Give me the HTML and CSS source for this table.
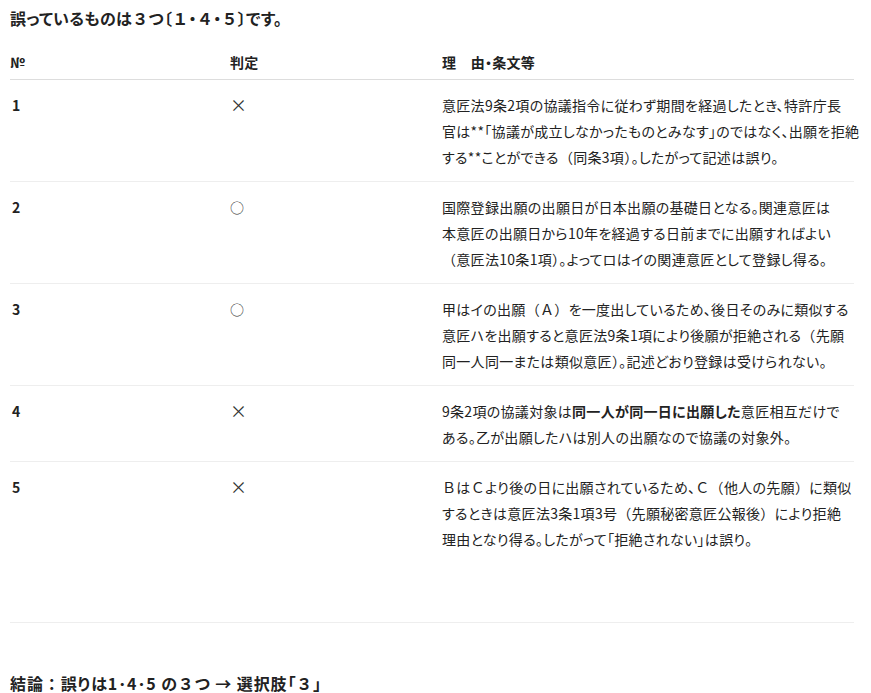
FILE: index.html
```html
<!DOCTYPE html>
<html lang="ja">
<head>
<meta charset="utf-8">
<title>判定表</title>
<link rel="stylesheet" href="styles.css">
</head>
<body>
<main class="page">
  <p class="title">誤っているものは<span class="fw">３</span>つ〔<span class="fw">１</span>・<span class="fw">４</span>・<span class="fw">５</span>〕です。</p>
  <table class="judge">
    <colgroup>
      <col class="c-no">
      <col class="c-mark">
      <col class="c-reason">
    </colgroup>
    <thead>
      <tr>
        <th>№</th>
        <th>判定</th>
        <th>理<span class="fw">　</span>由・条文等</th>
      </tr>
    </thead>
    <tbody>
      <tr>
        <td class="no">1</td>
        <td class="mark mark-x">×</td>
        <td class="reason">意匠法9条2項の協議指令に従わず期間を経過したとき、特許庁長<br>官は**「協議が成立しなかったものとみなす」のではなく、出願を拒絶<br>する**ことができる<span class="fw">（</span>同条3項<span class="fw">）</span>。したがって記述は誤り。</td>
      </tr>
      <tr>
        <td class="no">2</td>
        <td class="mark mark-o">○</td>
        <td class="reason">国際登録出願の出願日が日本出願の基礎日となる。関連意匠は<br>本意匠の出願日から10年を経過する日前までに出願すればよい<br><span class="fw">（</span>意匠法10条1項<span class="fw">）</span>。よってロはイの関連意匠として登録し得る。</td>
      </tr>
      <tr>
        <td class="no">3</td>
        <td class="mark mark-o">○</td>
        <td class="reason">甲はイの出願<span class="fw">（Ａ）</span>を一度出しているため、後日そのみに類似する<br>意匠ハを出願すると意匠法9条1項により後願が拒絶される<span class="fw">（</span>先願<br>同一人同一または類似意匠<span class="fw">）</span>。記述どおり登録は受けられない。</td>
      </tr>
      <tr>
        <td class="no">4</td>
        <td class="mark mark-x">×</td>
        <td class="reason">9条2項の協議対象は<strong>同一人が同一日に出願した</strong>意匠相互だけで<br>ある。乙が出願したハは別人の出願なので協議の対象外。</td>
      </tr>
      <tr class="last">
        <td class="no">5</td>
        <td class="mark mark-x">×</td>
        <td class="reason"><span class="fw">Ｂ</span>は<span class="fw">Ｃ</span>より後の日に出願されているため、<span class="fw">Ｃ（</span>他人の先願<span class="fw">）</span>に類似<br>するときは意匠法3条1項3号<span class="fw">（</span>先願秘密意匠公報後<span class="fw">）</span>により拒絶<br>理由となり得る。したがって「拒絶されない」は誤り。</td>
      </tr>
    </tbody>
  </table>
  <p class="conclusion">結論<span class="fw">：</span>誤りは1･4･5 の<span class="fw">３</span>つ → 選択肢「<span class="fw">３</span>」</p>
</main>
</body>
</html>
```

FILE: styles.css
```css
html, body {
  margin: 0;
  padding: 0;
  background: #ffffff;
}

body {
  font-family: "Noto Sans CJK JP", "Noto Sans", sans-serif;
  color: #222222;
  font-size: 14px;
  line-height: 26px;
  letter-spacing: 0.3px;
  font-feature-settings: "palt";
}

.fw {
  font-feature-settings: normal;
}

.page {
  padding: 5px 17px 0 10px;
}

.title {
  margin: 0;
  font-size: 16px;
  font-weight: 700;
  line-height: 26px;
}

.judge {
  width: 844px;
  border-collapse: collapse;
  table-layout: fixed;
}

.c-no { width: 220px; }
.c-mark { width: 212px; }
.c-reason { width: 412px; }

.judge th {
  text-align: left;
  font-weight: 700;
  font-size: 14px;
  padding: 18px 0 4px 0;
  border-bottom: 1px solid #dddddd;
  white-space: nowrap;
}

.judge td {
  vertical-align: top;
  padding: 12px 0 11px 0;
  border-bottom: 1px solid #eeeeee;
}

.judge td.no {
  font-weight: 700;
  padding-left: 2px;
}

.judge td.mark {
  color: #333333;
}

.judge td.mark-x {
  font-size: 17px;
}

.judge td.mark-o {
  font-size: 14px;
}

.judge td.reason {
  white-space: nowrap;
}

.judge tr.last td {
  padding-bottom: 70px;
}

.reason strong {
  font-weight: 700;
}

.conclusion {
  margin: 47px 0 0 0;
  font-size: 16px;
  font-weight: 700;
  line-height: 26px;
  letter-spacing: 0.9px;
}
```
